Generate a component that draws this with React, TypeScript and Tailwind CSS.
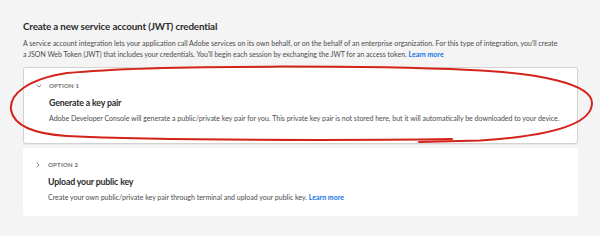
import React from "react";

type OptionCardProps = {
  label: string;
  title: string;
  open?: boolean;
  children: React.ReactNode;
};

function Chevron({ open }: { open?: boolean }) {
  return (
    <svg width="6" height="6" viewBox="0 0 6 6" className="shrink-0">
      {open ? (
        <path d="M0.6 1.8 L3 4.1 L5.4 1.8" fill="none" stroke="#707070" strokeWidth="0.9" />
      ) : (
        <path d="M1.8 0.6 L4.1 3 L1.8 5.4" fill="none" stroke="#707070" strokeWidth="0.9" />
      )}
    </svg>
  );
}

function OptionCard({ label, title, open, children }: OptionCardProps) {
  return (
    <div
      className={
        open
          ? "bg-white rounded-[3px] border border-[#d3d3d3] shadow-[0_1px_1px_rgba(0,0,0,0.06)] pl-[12px] pt-[13px] pb-[19px]"
          : "bg-white rounded-[3px] pl-[12px] pt-[12px] pb-[13px]"
      }
    >
      <div className="flex items-center gap-[7px] h-[9px]">
        <Chevron open={open} />
        <span className="text-[6px] font-bold tracking-[0.04em] text-[#6e6e6e] uppercase">{label}</span>
      </div>
      <div className="pl-[13px]">
        <div className="mt-[7px] text-[8.8px] font-bold tracking-[-0.02em] text-[#2c2c2c] leading-[12px]">{title}</div>
        <div className="mt-[4px] text-[7px] text-[#4b4b4b] leading-[11px] whitespace-nowrap">{children}</div>
      </div>
    </div>
  );
}

export default function App() {
  return (
    <div className="relative w-[600px] h-[236px] bg-[#f4f4f4] font-['Lato',sans-serif] overflow-hidden">
      <div className="pl-[23px] pr-[22px] pt-[19px]">
        <h1 className="text-[9.8px] font-bold tracking-[-0.015em] text-[#2c2c2c] leading-[14px]">
          Create a new service account (JWT) credential
        </h1>
        <p className="mt-[5px] text-[7px] text-[#4b4b4b] leading-[11px] whitespace-nowrap">
          A service account integration lets your application call Adobe services on its own behalf, or on the behalf of an
          enterprise organization. For this type of integration, you'll create
          <br />
          a JSON Web Token (JWT) that includes your credentials. You'll begin each session by exchanging the JWT for an
          access token. <span className="text-[#1473e6] font-bold">Learn more</span>
        </p>
        <div className="mt-[7px] flex flex-col gap-[4px]">
          <OptionCard label="Option 1" title="Generate a key pair" open>
            Adobe Developer Console will generate a public/private key pair for you. This private key pair is not stored
            here, but it will automatically be downloaded to your device.
          </OptionCard>
          <OptionCard label="Option 2" title="Upload your public key">
            Create your own public/private key pair through terminal and upload your public key.{" "}
            <span className="text-[#1473e6] font-bold">Learn more</span>
          </OptionCard>
        </div>
      </div>

      {/* hand-drawn annotation */}
      <svg
        className="absolute inset-0 pointer-events-none"
        width="600"
        height="236"
        viewBox="0 0 600 236"
      >
        <path
          d="M452 139 C350 140.5 160 140.5 67 136 C35 134 14 126 11 110 C9 94 28 79 67 73 C160 64 380 66 470 70 C540 73 592 84 592 103 C592 124 550 136 480 140.5 L419 142"
          fill="none"
          stroke="#d3231b"
          strokeWidth="2"
          strokeLinecap="round"
        />
      </svg>
    </div>
  );
}
